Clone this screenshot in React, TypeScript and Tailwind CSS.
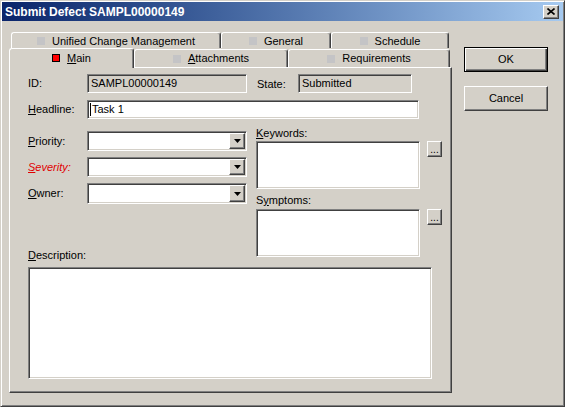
import React from "react";

const raised =
  "border border-t-white border-l-white border-b-[#404040] border-r-[#404040] shadow-[inset_-1px_-1px_0_#808080]";
const sunken =
  "border border-t-[#808080] border-l-[#808080] border-b-white border-r-white shadow-[inset_1px_1px_0_#404040,inset_-1px_-1px_0_#d4d0c8]";
const tabCls =
  "border-t border-l border-r border-t-white border-l-white border-r-[#404040] shadow-[inset_-1px_0_0_#808080] rounded-t-[3px] bg-[#d4d0c8] flex items-center justify-center gap-[7px]";

function Combo({ h }: { h: string }) {
  return (
    <div className={`${sunken} bg-white flex justify-end w-[160px] p-[1px] ${h}`}>
      <div className={`${raised} bg-[#d4d0c8] w-[16px] h-full flex items-center justify-center`}>
        <svg width="7" height="4" viewBox="0 0 7 4">
          <path d="M0 0H7L3.5 4Z" fill="#000" />
        </svg>
      </div>
    </div>
  );
}

function Dots() {
  return (
    <div className={`${raised} bg-[#d4d0c8] w-[15px] h-[16px] flex items-end justify-center pb-[1px] text-[10px] leading-[10px]`}>
      ...
    </div>
  );
}

function GreySq() {
  return <span className="w-[8px] h-[8px] bg-[#c4c4c6] inline-block" />;
}

export default function App() {
  return (
    <div className="w-[565px] h-[407px] bg-[#d4d0c8] border border-t-[#d4d0c8] border-l-[#d4d0c8] border-b-[#404040] border-r-[#404040] shadow-[inset_1px_1px_0_#fff,inset_-1px_-1px_0_#808080] p-[1px] text-[11px] text-black [font-family:Liberation_Sans,Arial,sans-serif] overflow-hidden">
      {/* Title bar */}
      <div className="h-[19px] bg-gradient-to-r from-[#0a246a] to-[#a6caf0] flex items-center justify-between pl-[3px] pr-[4px]">
        <span className="text-white font-bold text-[12px] leading-none">Submit Defect SAMPL00000149</span>
        <div className={`${raised} bg-[#d4d0c8] w-[16px] h-[14px] flex items-center justify-center`}>
          <svg width="8" height="7" viewBox="0 0 8 7">
            <path d="M0.5 0.5L7.5 6.5M7.5 0.5L0.5 6.5" stroke="#000" strokeWidth="1.6" />
          </svg>
        </div>
      </div>

      {/* Body */}
      <div className="flex pt-[11px] pl-[7px]">
        {/* Left: tabs + panel */}
        <div className="w-[443px] flex flex-col">
          {/* back row */}
          <div className="flex h-[16px] ml-[2px]">
            <div className={`${tabCls} w-[210px] h-[16px] pt-[1px]`}>
              <GreySq />
              <span>Unified Change Management</span>
            </div>
            <div className={`${tabCls} w-[110px] h-[16px] pt-[1px]`}>
              <GreySq />
              <span>General</span>
            </div>
            <div className={`${tabCls} w-[118px] h-[16px] pt-[1px]`}>
              <GreySq />
              <span>Schedule</span>
            </div>
          </div>
          {/* front row */}
          <div className="flex items-start h-[19px]">
            <div className={`${tabCls} w-[125px] h-[20px] relative z-10 pb-[1px]`}>
              <span className="w-[8px] h-[8px] bg-[#ff0000] border border-black inline-block" />
              <span>
                <span className="underline underline-offset-[1px]">M</span>ain
              </span>
            </div>
            <div className={`${tabCls} w-[154px] h-[18px] mt-[1px]`}>
              <GreySq />
              <span>
                <span className="underline underline-offset-[1px]">A</span>ttachments
              </span>
            </div>
            <div className={`${tabCls} w-[162px] h-[18px] mt-[1px]`}>
              <GreySq />
              <span>Requirements</span>
            </div>
          </div>
          {/* panel */}
          <div className="h-[326px] border border-t-white border-l-white border-b-[#404040] border-r-[#404040] shadow-[inset_-1px_-1px_0_#808080] pl-[18px] pt-[6px]">
            {/* ID / State */}
            <div className="flex items-center h-[19px]">
              <span className="w-[59px]">ID:</span>
              <div className={`${sunken} w-[160px] h-[19px] flex items-center pl-[3px]`}>SAMPL00000149</div>
              <span className="w-[41px] ml-[10px] pt-[2px]">State:</span>
              <div className={`${sunken} w-[114px] h-[19px] flex items-center pl-[3px]`}>Submitted</div>
            </div>
            {/* Headline */}
            <div className="flex items-center h-[19px] mt-[7px]">
              <span className="w-[59px]">
                <span className="underline underline-offset-[1px]">H</span>eadline:
              </span>
              <div className={`${sunken} bg-white w-[332px] h-[19px] flex items-center pl-[2px]`}>
                <span className="w-[1px] h-[13px] bg-black mr-[1px]" />
                Task 1
              </div>
            </div>
            {/* two columns */}
            <div className="flex mt-[7px]">
              <div className="w-[219px] pt-[5px] flex flex-col">
                <div className="flex items-center">
                  <span className="w-[59px]">
                    <span className="underline underline-offset-[1px]">P</span>riority:
                  </span>
                  <Combo h="h-[20px]" />
                </div>
                <div className="flex items-center mt-[6px]">
                  <span className="w-[59px] text-[#e00000] italic">
                    <span className="underline underline-offset-[1px]">S</span>everity:
                  </span>
                  <Combo h="h-[20px]" />
                </div>
                <div className="flex items-center mt-[6px]">
                  <span className="w-[59px]">
                    <span className="underline underline-offset-[1px]">O</span>wner:
                  </span>
                  <Combo h="h-[21px]" />
                </div>
              </div>
              <div className="ml-[9px] flex flex-col">
                <span className="h-[14px] leading-[14px]">
                  <span className="underline underline-offset-[1px]">K</span>eywords:
                </span>
                <div className="flex items-start mt-[1px]">
                  <div className={`${sunken} bg-white w-[164px] h-[48px]`} />
                  <div className="ml-[7px]">
                    <Dots />
                  </div>
                </div>
                <span className="h-[14px] leading-[14px] mt-[4px]">
                  S<span className="underline underline-offset-[1px]">y</span>mptoms:
                </span>
                <div className="flex items-start mt-[2px]">
                  <div className={`${sunken} bg-white w-[164px] h-[48px]`} />
                  <div className="ml-[7px]">
                    <Dots />
                  </div>
                </div>
              </div>
            </div>
            {/* Description */}
            <div className="h-[14px] leading-[14px] -mt-[9px]">
              <span className="underline underline-offset-[1px]">D</span>escription:
            </div>
            <div className={`${sunken} bg-white w-[404px] h-[112px] mt-[5px]`} />
          </div>
        </div>

        {/* Right: buttons */}
        <div className="ml-[12px] mt-[15px] flex flex-col w-[84px]">
          <div className="h-[25px] border border-black shadow-[inset_1px_1px_0_#fff,inset_-1px_-1px_0_#404040,inset_-2px_-2px_0_#808080] flex items-center justify-center">
            OK
          </div>
          <div className={`${raised} h-[25px] mt-[14px] flex items-center justify-center`}>Cancel</div>
        </div>
      </div>
    </div>
  );
}
